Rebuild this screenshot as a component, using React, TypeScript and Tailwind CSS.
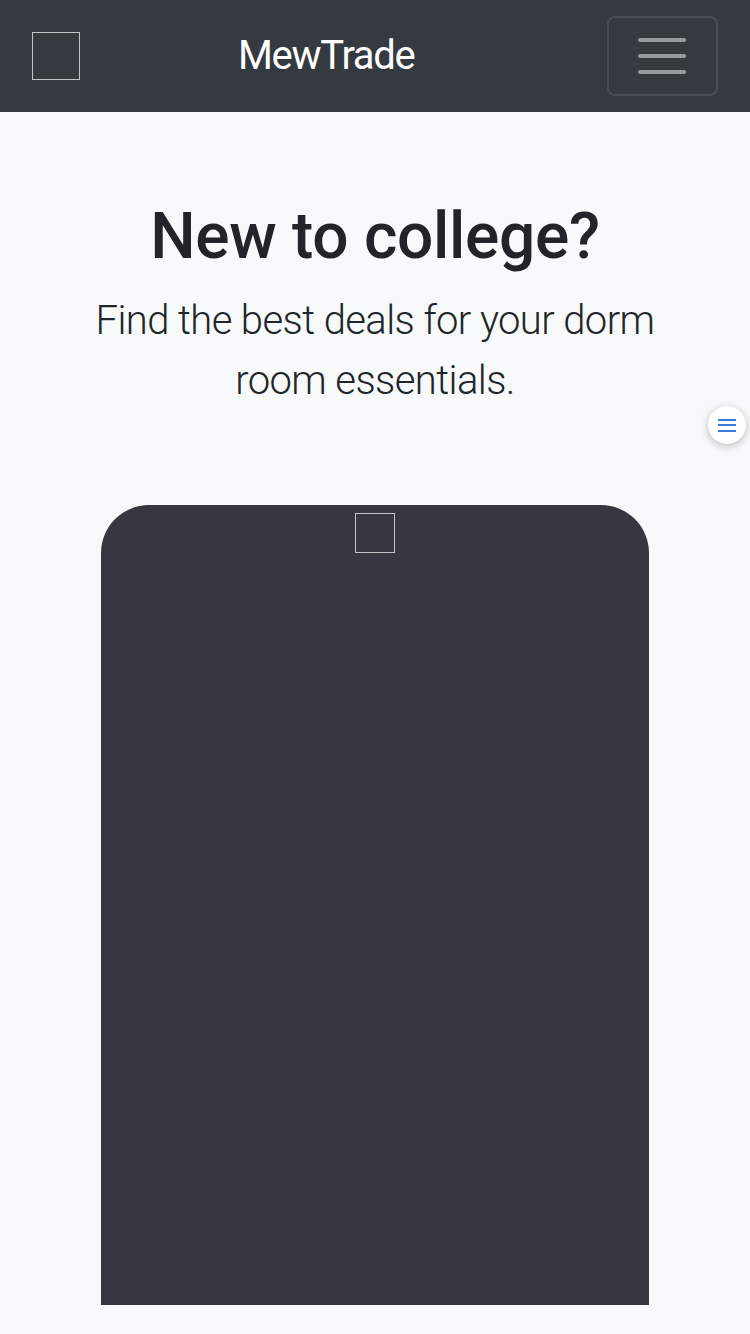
import React from 'react';

function Placeholder({ className }: { className: string }) {
  return <div className={`border border-[#c4c4c4] ${className}`} />;
}

export default function App() {
  return (
    <div className="relative min-h-[1334px] bg-[#f8f9fa] font-['Roboto','Liberation_Sans',sans-serif] text-[#212529]">
      <nav className="flex h-[112px] items-center bg-[#343a40] px-[32px]">
        <Placeholder className="h-[48px] w-[48px]" />
        <span className="ml-[158px] text-[40px] leading-[60px] tracking-[-1.3px] text-white">MewTrade</span>
        <button className="ml-auto flex h-[80px] w-[111px] items-center rounded-[8px] border-2 border-white/10 pl-[23px]">
          <svg width="60" height="60" viewBox="0 0 30 30">
            <path
              d="M4 7h22M4 15h22M4 23h22"
              stroke="rgba(255,255,255,0.5)"
              strokeWidth="2"
              strokeLinecap="round"
              fill="none"
            />
          </svg>
        </button>
      </nav>

      <section className="px-[48px] pt-[86px] text-center">
        <h1 className="text-[64px] font-medium leading-[77px] tracking-[-0.3px]">New to college?</h1>
        <p className="mx-auto mt-[16px] w-[600px] text-[40px] font-light leading-[60px] tracking-[-0.6px]">
          Find the best deals for your dorm room essentials.
        </p>
      </section>

      <div className="mx-auto mt-[94px] flex h-[800px] w-[548px] justify-center rounded-t-[48px] bg-[#353840] pt-[8px]">
        <Placeholder className="h-[40px] w-[40px]" />
      </div>

      <button className="absolute left-[708px] top-[406px] flex h-[38px] w-[38px] flex-col items-center justify-center gap-[3.5px] rounded-full bg-white shadow-[0_2px_8px_rgba(0,0,0,0.25)]">
        <span className="h-[2px] w-[18px] bg-[#3a7bd5]" />
        <span className="h-[2px] w-[18px] bg-[#3a7bd5]" />
        <span className="h-[2px] w-[18px] bg-[#3a7bd5]" />
      </button>
    </div>
  );
}
